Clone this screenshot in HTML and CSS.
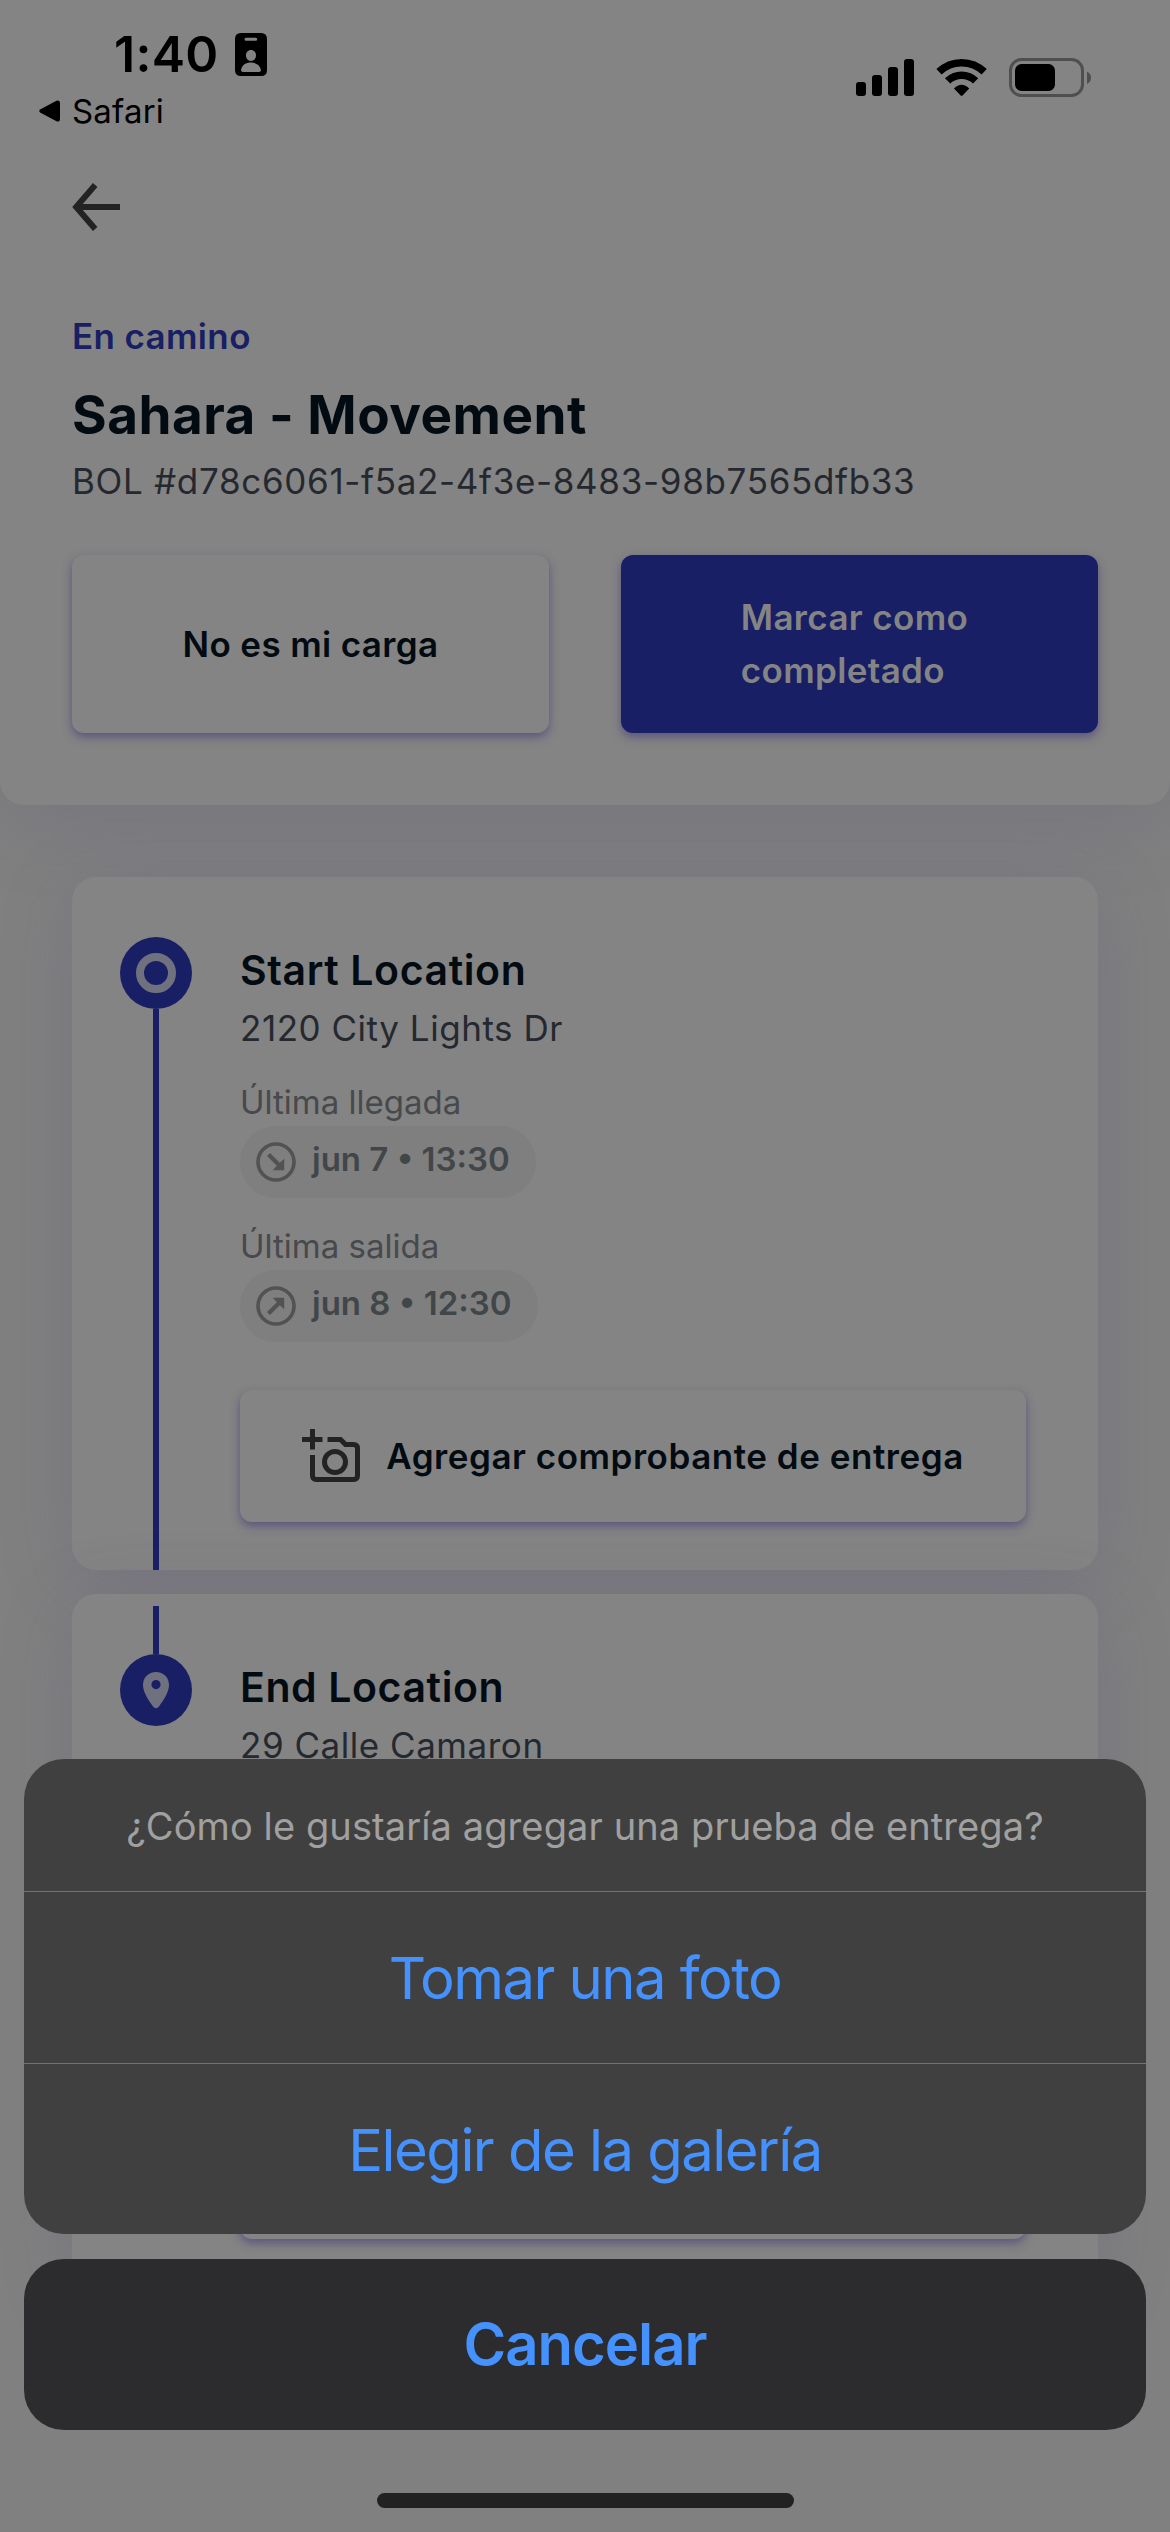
FILE: index.html
```html
<!DOCTYPE html>
<html lang="es">
<head>
<meta charset="utf-8">
<title>Sahara - Movement</title>
<link rel="stylesheet" href="styles.css">
</head>
<body>
<div class="screen">
  <header class="header">
    <div class="status">
      <div class="status-left">
        <div class="clock-row">
          <span class="clock">1:40</span>
          <svg width="32" height="43" viewBox="0 0 32 43"><path fill-rule="evenodd" d="M6 0H26Q32 0 32 6V37Q32 43 26 43H6Q0 43 0 37V6Q0 0 6 0ZM11 4.800A1.500 1.500 0 0 0 11 7.800H20.700A1.500 1.500 0 0 0 20.700 4.800ZM16 17C13 17 11 19.300 11 22.300C11 25.500 13 28 16 28S21 25.500 21 22.300C21 19.300 19 17 16 17ZM6 37Q6 39 8 39H24Q26 39 26 37C25 32 21 29.600 16 29.600S7 32 6 37Z"/></svg>
        </div>
        <div class="back-app">
          <svg width="22" height="22" viewBox="0 0 22 22"><path d="M1.500 9.200L17.500 0.700Q21 -0.500 21 3V19Q21 22.500 17.500 21.300L1.500 12.800Q-1 11 1.500 9.200Z"/></svg>
          <span class="safari">Safari</span>
        </div>
      </div>
      <svg class="status-icons" width="236" height="40" viewBox="0 0 236 40">
        <rect x="0" y="23" width="10" height="14" rx="3"/><rect x="16" y="16" width="10" height="21" rx="3"/><rect x="32" y="8" width="10" height="29" rx="3"/><rect x="48" y="0" width="10" height="37" rx="3"/>
        <g fill="none" stroke="#000"><path stroke-width="7.500" d="M83 12.800A32.500 32.500 0 0 1 128.200 12.800"/><path stroke-width="7.500" d="M91.600 21.900A20 20 0 0 1 119.600 21.900"/></g>
        <path d="M98 29.500Q105.500 22 113.200 29.500L106.800 36.200Q105.600 37.500 104.400 36.200Z"/>
        <rect x="154.500" y="0.500" width="72" height="36" rx="11" fill="none" stroke="#4f4f4f" stroke-width="3"/>
        <rect x="159" y="5" width="40" height="27" rx="6.500"/>
        <path fill="#4f4f4f" d="M231 12.500Q235 14.500 235 18.700T231 25Z"/>
      </svg>
    </div>
    <svg width="48" height="48" viewBox="0 0 48 48"><path fill="none" stroke="#232323" stroke-width="6" d="M48 24H5M23.200 2L4.200 24L23.200 46"/></svg>
    <p class="state">En camino</p>
    <h1 class="title">Sahara - Movement</h1>
    <p class="bol">BOL #d78c6061-f5a2-4f3e-8483-98b7565dfb33</p>
    <div class="actions">
      <div class="btn"><span>No es mi carga</span></div>
      <div class="btn primary"><span>Marcar como<br>completado</span></div>
    </div>
  </header>

  <main class="stops">
    <section class="card">
      <div class="rail">
        <svg width="72" height="72" viewBox="0 0 72 72"><circle cx="36" cy="36" r="36" fill="#181f65"/><circle cx="36" cy="36" r="16" fill="none" stroke="#70717f" stroke-width="8"/></svg>
        <div class="line"></div>
      </div>
      <div class="info">
        <h2 class="name">Start Location</h2>
        <p class="addr">2120 City Lights Dr</p>
        <p class="label">Última llegada</p>
        <div class="chip"><svg width="40" height="40" viewBox="0 0 40 40"><circle cx="20" cy="20" r="18" fill="none" stroke="#515253" stroke-width="3.600"/><path fill="#515253" d="M14 11L23.800 20.800L28.200 16.800V28.200H16.800L20.800 23.800L11 14Z"/></svg><span>jun 7 • 13:30</span></div>
        <p class="label departure">Última salida</p>
        <div class="chip"><svg width="40" height="40" viewBox="0 0 40 40"><circle cx="20" cy="20" r="18" fill="none" stroke="#515253" stroke-width="3.600"/><path fill="#515253" d="M14 29L23.800 19.200L28.200 23.200V11.800H16.800L20.800 16.200L11 26Z"/></svg><span>jun 8 • 12:30</span></div>
        <div class="btn upload">
          <svg width="60" height="54" viewBox="0 0 60 54"><g fill="none" stroke="#232323" stroke-width="5"><path d="M10.500 0V20.500M0 10.500H20.500"/><path d="M10.500 26V46.500Q10.500 50.500 14.500 50.500H51.500Q55.500 50.500 55.500 46.500V19.500Q55.500 15.500 51.500 15.500H43.500L38.500 10.500H25.500"/><circle cx="33" cy="33" r="10.500"/></g></svg>
          <span>Agregar comprobante de entrega</span>
        </div>
      </div>
    </section>
    <section class="card second">
      <div class="rail">
        <div class="line top"></div>
        <svg width="72" height="72" viewBox="0 0 72 72"><circle cx="36" cy="36" r="36" fill="#181f65"/><path fill="#70717f" fill-rule="evenodd" d="M36 18C28.500 18 23 23.500 23 31C23 38 28 45.500 33 52.500Q36 56 39 52.500C44 45.500 49 38 49 31C49 23.500 43.500 18 36 18ZM36 26A4.600 4.600 0 1 1 36 35.200A4.600 4.600 0 1 1 36 26Z"/></svg>
      </div>
      <div class="info">
        <h2 class="name">End Location</h2>
        <p class="addr">29 Calle Camaron</p>
        <div class="btn upload covered"></div>
      </div>
    </section>
  </main>

  <div class="sheet">
    <div class="options">
      <p class="question">¿Cómo le gustaría agregar una prueba de entrega?</p>
      <p class="option">Tomar una foto</p>
      <p class="option">Elegir de la galería</p>
    </div>
    <p class="cancel">Cancelar</p>
    <div class="home"></div>
  </div>
</div>
</body>
</html>
```
FILE: styles.css
```css
* { box-sizing: border-box; margin: 0; padding: 0; }
body { background: #808080; font-family: Inter, "Liberation Sans", sans-serif; font-weight: 400; color: #030b12; }
svg { display: block; flex: none; }
span, p, h1, h2 { white-space: nowrap; }
.screen { position: relative; width: 1170px; height: 2532px; overflow: hidden; display: flex; flex-direction: column; }

.header { height: 805px; flex: none; background: #848484; border-radius: 0 0 24px 24px; box-shadow: 0 24px 72px rgba(88, 80, 120, .2); display: flex; flex-direction: column; padding: 0 72px; }
.status { display: flex; justify-content: space-between; height: 183px; color: #000; margin: 0 -72px; padding: 33px 78px 0 39px; }
.clock-row { display: flex; align-items: flex-start; gap: 16px; padding-left: 75px; height: 48px; }
.clock { flex: 0 0 102px; font-size: 50px; line-height: 42px; font-weight: 600; letter-spacing: .3px; }
.back-app { display: flex; align-items: center; gap: 11px; height: 60px; }
.safari { font-size: 33px; letter-spacing: .2px; }
.status-icons { margin-top: 26px; overflow: visible; }
.state { font-size: 35px; line-height: 42px; font-weight: 600; letter-spacing: .35px; color: #181f65; margin-top: 84px; }
.title { font-size: 53px; line-height: 64px; font-weight: 700; letter-spacing: .5px; margin-top: 26px; }
.bol { font-size: 35px; line-height: 44px; letter-spacing: .67px; color: #25292f; margin-top: 12px; }
.actions { display: flex; gap: 72px; margin-top: 52px; }
.btn { display: flex; align-items: center; justify-content: center; background: #848484; border-radius: 12px; box-shadow: 0 4px 10px rgba(64, 54, 120, .6); font-size: 35px; font-weight: 600; letter-spacing: .35px; }
.actions .btn { height: 178px; flex: 0 0 477px; line-height: 53px; }
.actions .primary { background: #181f65; color: #848484; padding-right: 10px; }

.stops { display: flex; flex-direction: column; gap: 24px; padding: 72px 72px 0; }
.card { display: flex; gap: 48px; height: 693px; background: #848484; border-radius: 24px; box-shadow: 0 12px 72px rgba(88, 80, 120, .24); padding: 60px 72px 0 48px; }
.rail { display: flex; flex-direction: column; align-items: center; width: 72px; }
.line { width: 6px; flex: 1; background: #181f65; }
.line.top { flex: 0 0 48px; }
.second { padding-top: 12px; }
.info { flex: 1; display: flex; flex-direction: column; align-items: flex-start; }
.second .info { padding-top: 48px; }
.name { font-size: 41px; line-height: 50px; font-weight: 600; letter-spacing: .6px; margin-top: 8px; }
.addr { font-size: 35px; line-height: 44px; letter-spacing: .53px; color: #25292f; margin-top: 11px; }
.label { font-size: 33px; line-height: 40px; height: 44px; color: #47494c; margin-top: 32px; }
.departure { margin-top: 28px; }
.chip { height: 72px; border-radius: 36px; background: #7f7f7f; display: flex; align-items: center; gap: 16px; padding: 0 26px 0 16px; font-size: 33px; font-weight: 600; color: #414649; }
.chip span { padding-bottom: 6px; }
.upload { align-self: stretch; height: 132px; gap: 24px; letter-spacing: .53px; margin-top: 48px; }
.covered { margin-top: 340px; }

.sheet { position: absolute; left: 24px; right: 24px; top: 1759px; display: flex; flex-direction: column; gap: 25px; text-align: center; }
.options { height: 475px; border-radius: 40px; background: #404040; overflow: hidden; }
.question { height: 132px; line-height: 134px; font-size: 38px; letter-spacing: .1px; color: #a0a0a0; }
.option { height: 172px; border-top: 1px solid #737373; line-height: 172px; font-size: 58px; letter-spacing: -1.550px; color: #4592ff; }
.cancel { height: 171px; border-radius: 40px; background: #2c2c2e; line-height: 171px; font-size: 58px; font-weight: 600; letter-spacing: -1.000px; color: #4592ff; }
.home { align-self: center; width: 417px; height: 15px; border-radius: 8px; background: #222; margin-top: 38px; }
```
